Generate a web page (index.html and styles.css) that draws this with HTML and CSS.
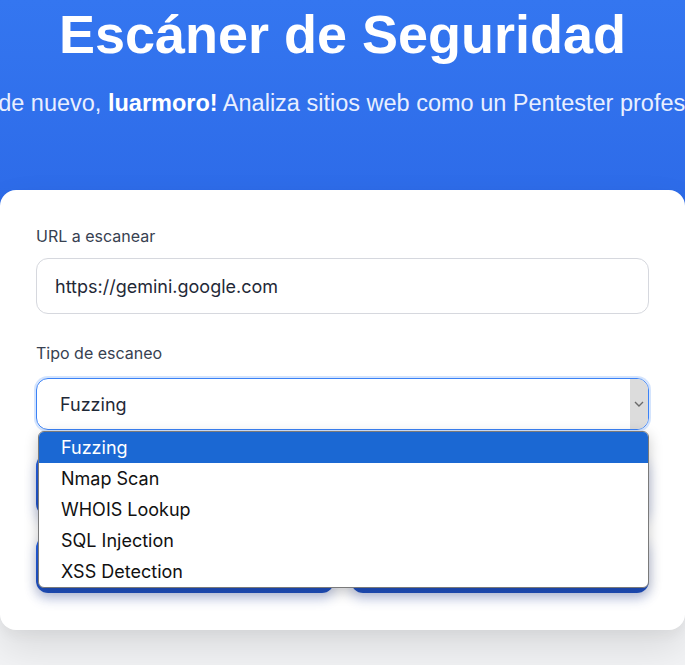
FILE: index.html
```html
<!DOCTYPE html>
<html lang="es">
<head>
<meta charset="utf-8">
<title>Escáner de Seguridad</title>
<link rel="stylesheet" href="styles.css">
</head>
<body>
<header class="hero">
  <h1 class="hero-title">Escáner de Seguridad</h1>
  <p class="hero-sub">¡Bienvenido de nuevo, <strong>luarmoro!</strong> Analiza sitios web como un Pentester profesional.</p>
</header>
<main class="card">
  <label class="label label-url">URL a escanear</label>
  <div class="input">https://gemini.google.com</div>
  <label class="label label-type">Tipo de escaneo</label>
  <div class="select-wrap">
    <div class="select">
      <span class="select-value">Fuzzing</span>
      <span class="select-btn">
        <svg width="10" height="6" viewBox="0 0 10 6"><path d="M1 1l4 4 4-4" fill="none" stroke="#6b6b6b" stroke-width="1.4"/></svg>
      </span>
    </div>
    <ul class="popup">
      <li class="opt opt-active">Fuzzing</li>
      <li class="opt">Nmap Scan</li>
      <li class="opt">WHOIS Lookup</li>
      <li class="opt">SQL Injection</li>
      <li class="opt">XSS Detection</li>
    </ul>
  </div>
  <div class="btn btn-full"></div>
  <div class="btn-row">
    <div class="btn"></div>
    <div class="btn"></div>
  </div>
</main>
</body>
</html>
```
FILE: styles.css
```css
* { box-sizing: border-box; }
html, body { margin: 0; padding: 0; }
body {
  background: #f3f4f6;
  font-family: Inter, "Noto Sans", sans-serif;
  width: 685px;
  overflow: hidden;
  height: 665px;
}
.hero {
  background: linear-gradient(180deg, #3476f0 0%, #2c69e7 100%);
  height: 240px;
  padding-top: 7px;
  text-align: center;
  color: #fff;
  overflow: hidden;
}
.hero-title {
  margin: 0;
  font-family: "Liberation Sans", Arial, sans-serif;
  font-weight: 700;
  font-size: 54px;
  line-height: 54px;
  white-space: nowrap;
}
.hero-sub {
  margin: 28px -262px 0 -338px;
  font-family: "Liberation Sans", Arial, sans-serif;
  font-size: 23.5px;
  line-height: 28px;
  color: #e9efff;
  white-space: nowrap;
}
.hero-sub strong { color: #fff; font-weight: 700; }
.card {
  position: relative;
  margin-top: -50px;
  background: #fff;
  border-radius: 16px;
  padding: 36px 36px 37px;
  box-shadow: 0 20px 40px rgba(0,0,0,0.10), 0 6px 12px rgba(0,0,0,0.04);
  display: flex;
  flex-direction: column;
}
.label {
  display: block;
  font-size: 16px;
  line-height: 20px;
  color: #374151;
  font-weight: 400;
}
.label-url { margin-bottom: 12px; }
.label-type { margin-top: 29px; margin-bottom: 15px; }
.input {
  height: 56px;
  border: 1px solid #d6d8de;
  border-radius: 12px;
  padding: 0 18px;
  display: flex;
  align-items: center;
  font-size: 18px;
  color: #1f2937;
}
.select-wrap { position: relative; }
.select {
  height: 52px;
  border: 1px solid #3b82f6;
  border-radius: 12px;
  box-shadow: 0 0 0 2px rgba(59,130,246,0.22);
  display: flex;
  align-items: center;
  padding-left: 23px;
  font-size: 18px;
  color: #1f2937;
  overflow: hidden;
}
.select-value { flex: 1; }
.select-btn {
  width: 18px;
  align-self: stretch;
  background: #dcdcdc;
  display: flex;
  align-items: center;
  justify-content: center;
}
.popup {
  position: absolute;
  left: 2px;
  right: 0;
  top: 53px;
  margin: 0;
  padding: 0;
  list-style: none;
  background: #fff;
  border: 1px solid #7a7a7a;
  border-radius: 6px;
  overflow: hidden;
  box-shadow: 0 4px 14px rgba(0,0,0,0.22);
  z-index: 2;
}
.opt {
  height: 31px;
  line-height: 31px;
  padding-left: 22px;
  font-size: 18px;
  color: #111;
}
.opt-active { background: #1b68d3; color: #fff; }
.btn {
  height: 62px;
  border-radius: 12px;
  background: linear-gradient(180deg, #2563eb 0%, #1f4fbf 100%);
  box-shadow: 0 6px 12px rgba(30,64,175,0.25);
}
.btn-full { margin-top: 24px; }
.btn-row {
  margin-top: 20px;
  display: grid;
  grid-template-columns: 1fr 1fr;
  gap: 17px;
}
.btn-row .btn { height: 57px; }
```
